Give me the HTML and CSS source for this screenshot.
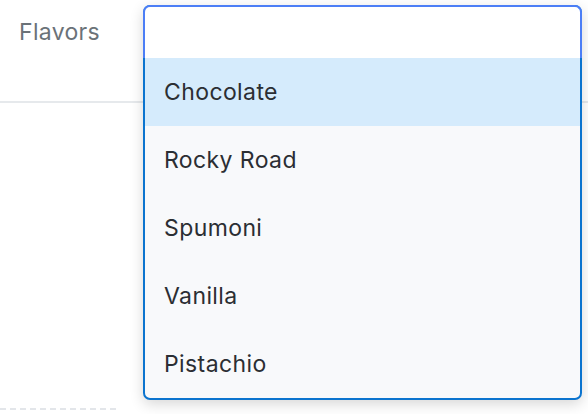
FILE: index.html
```html
<!DOCTYPE html>
<html>
<head>
<meta charset="utf-8">
<link rel="stylesheet" href="styles.css">
</head>
<body>
<div class="page">
  <div class="field">
    <label class="label">Flavors</label>
  </div>
  <div class="dashed"></div>
  <div class="dropdown">
    <div class="input"></div>
    <ul class="options">
      <li class="option active">Chocolate</li>
      <li class="option">Rocky Road</li>
      <li class="option">Spumoni</li>
      <li class="option">Vanilla</li>
      <li class="option">Pistachio</li>
    </ul>
  </div>
</div>
</body>
</html>
```
FILE: styles.css
```css
* { box-sizing: border-box; }
html, body { margin: 0; padding: 0; background: #fff; }
body { font-family: Inter, "Noto Sans", sans-serif; width: 588px; height: 414px; overflow: hidden; }
.page { position: relative; width: 588px; height: 414px; }
.field {
  height: 103px;
  border-bottom: 2px solid #e6e9ec;
  padding: 18px 0 0 19px;
}
.label { display: block; font-size: 23px; letter-spacing: 0.3px; color: #6b7278; line-height: 28px; }
.dashed {
  margin-top: 305px;
  width: 116px;
  border-top: 2px dashed #e3e6ea;
}
.dropdown {
  position: absolute;
  left: 143px;
  top: 5px;
  width: 439px;
  height: 395px;
  border: 2px solid #0b74cf;
  border-radius: 7px;
  background: #f8f9fb;
  box-shadow: 0 4px 14px rgba(0,0,0,0.16);
}
.input {
  margin: -2px -2px 0;
  height: 53px;
  background: #fff;
  border: 2px solid #4c7ef6;
  border-bottom: none;
  border-radius: 7px 7px 0 0;
}
.options { list-style: none; margin: 0; padding: 0; }
.option {
  height: 68px;
  padding: 0 0 1px 19px;
  display: flex;
  align-items: center;
  font-size: 23px;
  letter-spacing: 0.4px;
  color: #2b2e33;
}
.option.active { background: #d5ebfc; }
```
